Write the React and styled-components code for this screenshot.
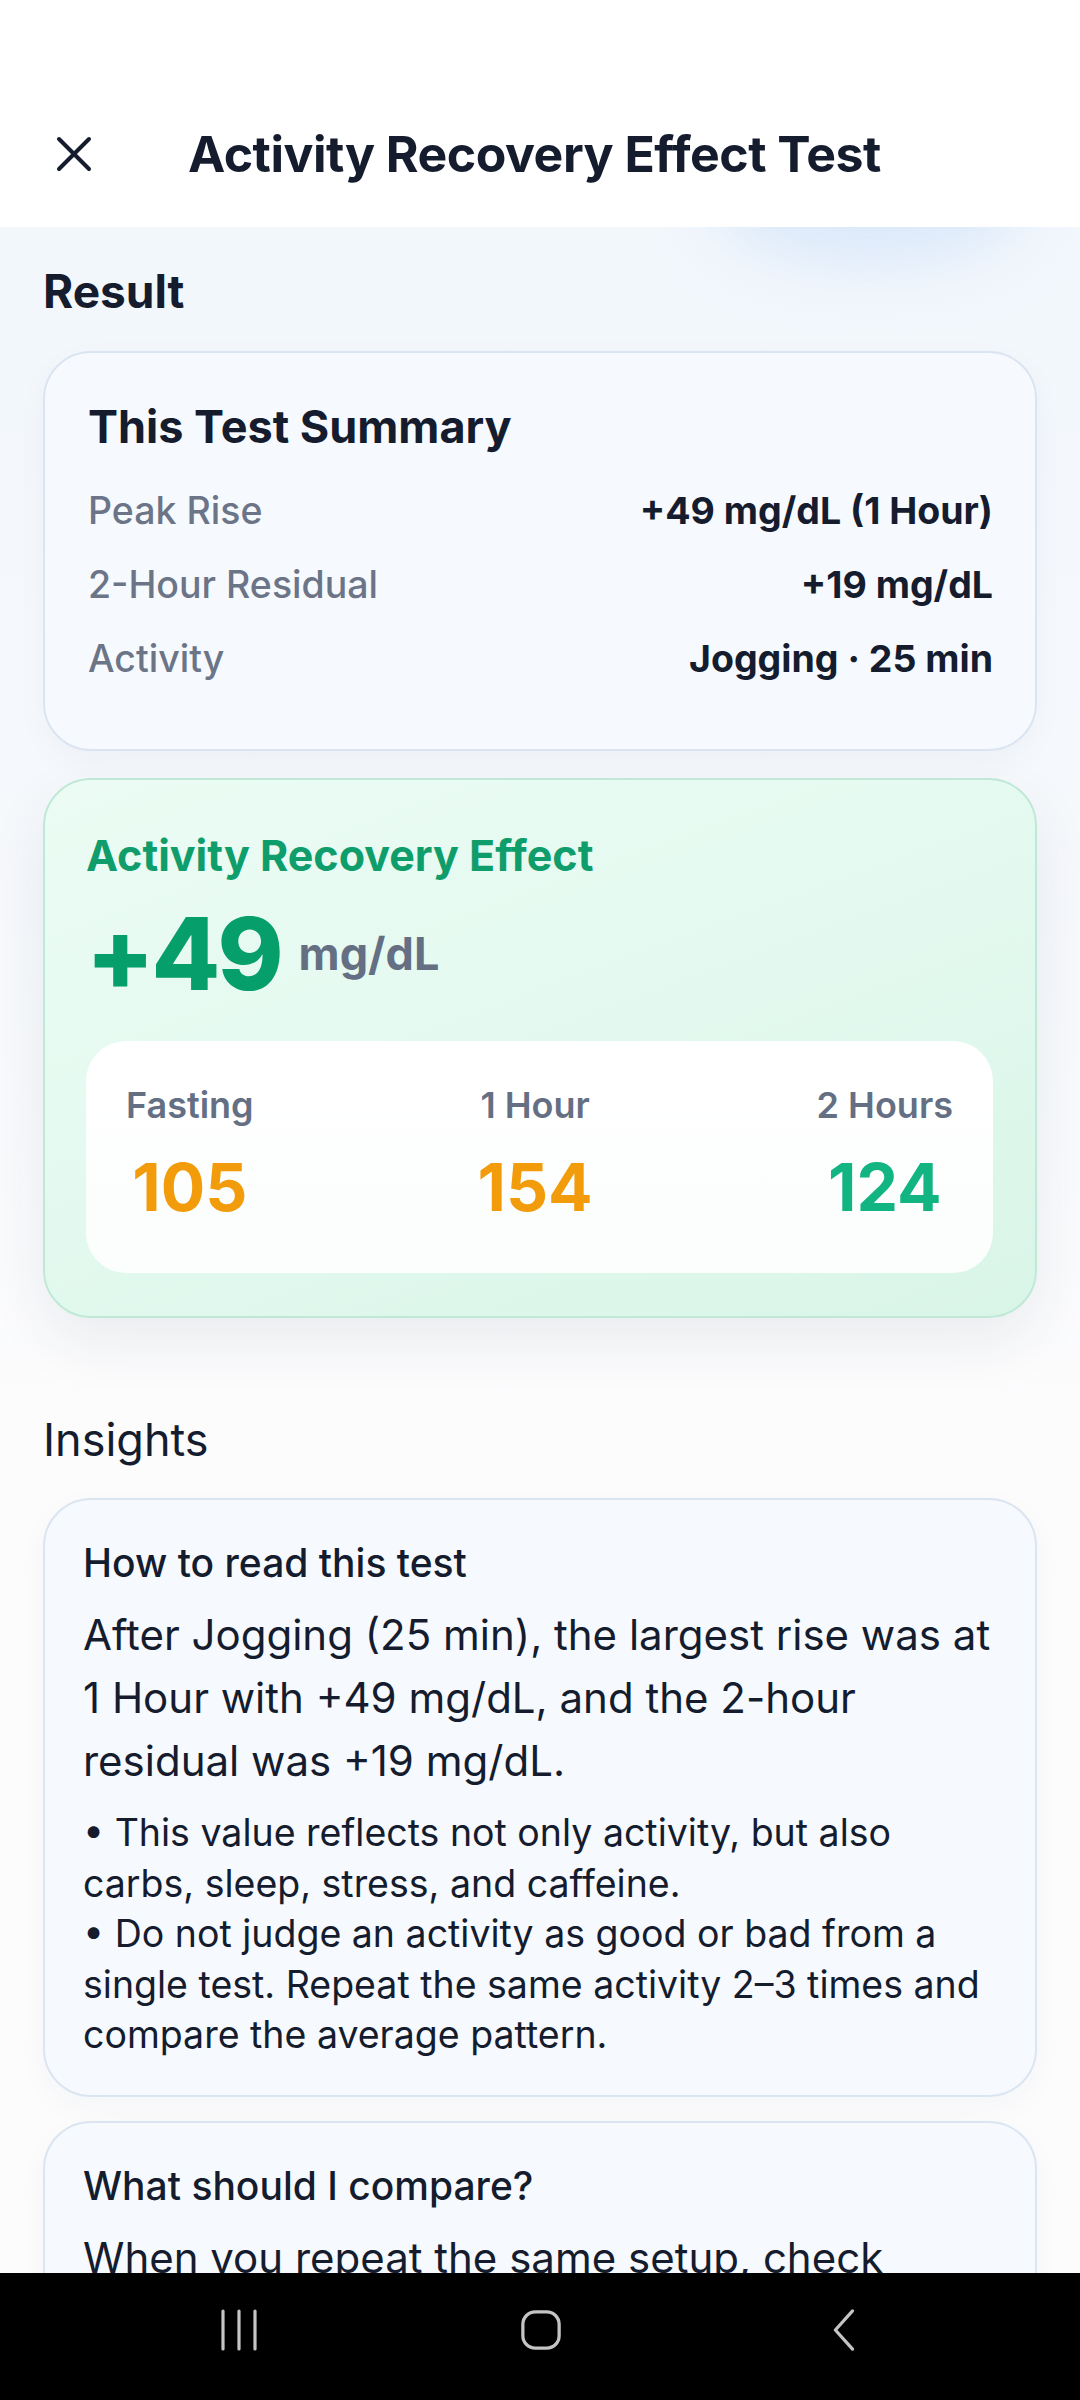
import React from 'react';
import styled, { createGlobalStyle } from 'styled-components';

const GlobalStyle = createGlobalStyle`
  html, body {
    margin: 0;
    padding: 0;
    background: #ffffff;
  }
  body {
    font-family: Inter, "Noto Sans", "Liberation Sans", sans-serif;
    color: #141c2e;
  }
  * { box-sizing: border-box; }
`;

const summaryRows = [
  { label: 'Peak Rise', value: '+49 mg/dL (1 Hour)' },
  { label: '2-Hour Residual', value: '+19 mg/dL' },
  { label: 'Activity', value: 'Jogging · 25 min' },
];

const readings = [
  { label: 'Fasting', value: 105, tone: 'amber' },
  { label: '1 Hour', value: 154, tone: 'amber' },
  { label: '2 Hours', value: 124, tone: 'green' },
];

const toneColors = {
  amber: '#f39c0b',
  green: '#12b582',
};

function CloseIcon() {
  return (
    <svg width="36" height="36" viewBox="0 0 36 36" fill="none">
      <path d="M3 3 L33 33 M33 3 L3 33" stroke="#141c2e" strokeWidth="4" strokeLinecap="round" />
    </svg>
  );
}

export default function App() {
  return (
    <>
      <GlobalStyle />
      <Screen>
        <Header>
          <CloseButton type="button" aria-label="Close">
            <CloseIcon />
          </CloseButton>
          <Title>Activity Recovery Effect Test</Title>
        </Header>

        <Scroll>
          <Glow />
          <SectionTitle $bold>Result</SectionTitle>

          <SummaryCard>
            <CardTitle>This Test Summary</CardTitle>
            <RowList>
              {summaryRows.map((row) => (
                <Row key={row.label}>
                  <RowLabel>{row.label}</RowLabel>
                  <RowValue>{row.value}</RowValue>
                </Row>
              ))}
            </RowList>
          </SummaryCard>

          <EffectCard>
            <EffectTitle>Activity Recovery Effect</EffectTitle>
            <BigLine>
              <BigNumber>+49</BigNumber>
              <Unit>mg/dL</Unit>
            </BigLine>
            <ReadingBox>
              {readings.map((r) => (
                <Reading key={r.label}>
                  <ReadingLabel>{r.label}</ReadingLabel>
                  <ReadingValue $tone={r.tone}>{r.value}</ReadingValue>
                </Reading>
              ))}
            </ReadingBox>
          </EffectCard>

          <SectionTitle $spaced>Insights</SectionTitle>

          <InsightCard>
            <InsightTitle>How to read this test</InsightTitle>
            <Lead>
              After Jogging (25 min), the largest rise was at 1 Hour with +49 mg/dL, and the 2-hour
              residual was +19 mg/dL.
            </Lead>
            <Notes>
              <p>• This value reflects not only activity, but also carbs, sleep, stress, and caffeine.</p>
              <p>• Do not judge an activity as good or bad from a single test. Repeat the same activity 2–3 times and compare the average pattern.</p>
            </Notes>
          </InsightCard>

          <InsightCard>
            <InsightTitle>What should I compare?</InsightTitle>
            <Lead>
              When you repeat the same setup, check whether the peak and the 2-hour residual move in the
              same direction.
            </Lead>
          </InsightCard>
        </Scroll>

        <NavBar>
          <NavIcon viewBox="0 0 40 44">
            <path d="M4 3v38M20 3v38M36 3v38" stroke="#c4c4c4" strokeWidth="3.2" strokeLinecap="round" />
          </NavIcon>
          <NavIcon viewBox="0 0 44 44">
            <rect x="3" y="3" width="38" height="38" rx="13" stroke="#c4c4c4" strokeWidth="3.4" fill="none" />
          </NavIcon>
          <NavIcon viewBox="0 0 44 44">
            <path d="M32 2 L14 22 L32 42" stroke="#c4c4c4" strokeWidth="3.4" strokeLinecap="round" strokeLinejoin="round" fill="none" />
          </NavIcon>
        </NavBar>
      </Screen>
    </>
  );
}

const Screen = styled.div`
  width: 1080px;
  height: 2400px;
  display: flex;
  flex-direction: column;
  overflow: hidden;
`;

const Header = styled.header`
  height: 227px;
  flex-shrink: 0;
  background: #ffffff;
  display: flex;
  align-items: center;
  padding: 80px 0 0 38px;
  position: relative;
  z-index: 2;
`;

const CloseButton = styled.button`
  width: 72px;
  height: 72px;
  border: none;
  background: transparent;
  padding: 0;
  display: flex;
  align-items: center;
  justify-content: center;
  cursor: pointer;
`;

const Title = styled.h1`
  margin: 0 0 0 78px;
  font-size: 50px;
  font-weight: 700;
  letter-spacing: -0.5px;
  color: #141c2e;
`;

const Scroll = styled.main`
  flex: 1;
  min-height: 0;
  overflow: hidden;
  position: relative;
  padding: 37px 43px 0;
  display: flex;
  flex-direction: column;
  background: linear-gradient(180deg, #f2f7fc 0%, #f7f9fc 35%, #fcfcfd 58%, #fcfcfd 100%);

  & > * {
    flex-shrink: 0;
  }
`;

const Glow = styled.div`
  position: absolute;
  top: -90px;
  left: 715px;
  width: 310px;
  height: 130px;
  border-radius: 50%;
  background: #dce9fa;
  filter: blur(28px);
  pointer-events: none;
`;

const SectionTitle = styled.h2`
  margin: ${({ $spaced }) => ($spaced ? '95px 0 31px' : '0 0 33px')};
  font-size: ${({ $bold }) => ($bold ? '46px' : '45px')};
  line-height: 54px;
  font-weight: ${({ $bold }) => ($bold ? 700 : 400)};
  color: #141c2e;
  position: relative;
`;

const Card = styled.section`
  position: relative;
  border-radius: 48px;
  border: 2px solid #dbe5f1;
  background: #f6f9fd;
`;

const SummaryCard = styled(Card)`
  height: 400px;
  padding: 48px 42px 0 43px;
  box-shadow: 0 10px 30px rgba(30, 50, 90, 0.04);
`;

const CardTitle = styled.h3`
  margin: 0 0 36px;
  font-size: 45px;
  line-height: 52px;
  font-weight: 700;
  color: #141c2e;
`;

const RowList = styled.div`
  display: flex;
  flex-direction: column;
  gap: 30px;
`;

const Row = styled.div`
  display: flex;
  justify-content: space-between;
  align-items: baseline;
  font-size: 37.5px;
  line-height: 44px;
`;

const RowLabel = styled.span`
  color: #6b7587;
  font-weight: 500;
`;

const RowValue = styled.span`
  color: #141c2e;
  font-weight: 700;
`;

const EffectCard = styled(Card)`
  margin-top: 27px;
  height: 540px;
  padding: 51px 42px 0 41px;
  border-color: #bfe8d6;
  background: linear-gradient(160deg, #ecfcf4 0%, #e3f9ef 50%, #d9f5e8 100%);
  box-shadow: 0 24px 60px rgba(30, 50, 80, 0.08);
`;

const EffectTitle = styled.h3`
  margin: 0;
  font-size: 43px;
  line-height: 48px;
  font-weight: 700;
  color: #0f9d6b;
`;

const BigLine = styled.div`
  margin-top: 25px;
  display: flex;
  align-items: center;
  gap: 18px;
`;

const BigNumber = styled.span`
  font-size: 100px;
  line-height: 100px;
  font-weight: 800;
  letter-spacing: -3px;
  color: #069e6a;
`;

const Unit = styled.span`
  font-size: 45px;
  line-height: 44px;
  font-weight: 700;
  color: #646f84;
`;

const ReadingBox = styled.div`
  margin-top: 37px;
  height: 232px;
  border-radius: 40px;
  background: linear-gradient(180deg, #ffffff 0%, #fbfefc 100%);
  display: flex;
  justify-content: space-between;
  padding: 44px 40px 0 40px;
`;

const Reading = styled.div`
  display: flex;
  flex-direction: column;
  align-items: center;
  gap: 23px;
`;

const ReadingLabel = styled.span`
  font-size: 36px;
  line-height: 41px;
  font-weight: 600;
  color: #646f84;
`;

const ReadingValue = styled.span`
  font-size: 66px;
  line-height: 77px;
  font-weight: 700;
  color: ${({ $tone }) => toneColors[$tone]};
`;

const InsightCard = styled(Card)`
  padding: 39px 38px 34px;
  display: flex;
  flex-direction: column;
  gap: 16px;
  box-shadow: 0 10px 30px rgba(30, 50, 90, 0.035);
  & + & {
    margin-top: 24px;
  }
`;

const InsightTitle = styled.h4`
  margin: 0;
  font-size: 39px;
  line-height: 48px;
  font-weight: 500;
  color: #141c2e;
`;

const Lead = styled.p`
  margin: 0;
  font-size: 42px;
  line-height: 63px;
  font-weight: 400;
  color: #141c2e;
`;

const Notes = styled.div`
  font-size: 37.5px;
  line-height: 50.5px;
  color: #141c2e;
  p {
    margin: 0;
  }
`;

const NavBar = styled.nav`
  height: 127px;
  flex-shrink: 0;
  background: #000000;
  display: flex;
  align-items: center;
  justify-content: space-between;
  padding: 0 216px 14px 218px;
  position: relative;
  z-index: 2;
`;

const NavIcon = styled.svg`
  width: 42px;
  height: 44px;
  fill: none;
`;
